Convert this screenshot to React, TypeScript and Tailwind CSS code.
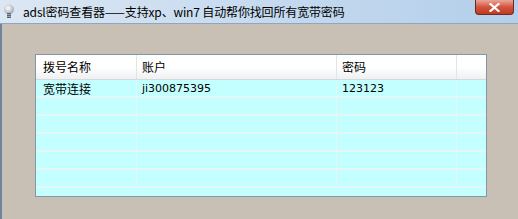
import React from "react";

const rows = [
  ["宽带连接", "ji300875395", "123123"],
  ["", "", ""],
  ["", "", ""],
  ["", "", ""],
  ["", "", ""],
  ["", "", ""],
];

export default function App() {
  const font = { fontFamily: '"Noto Sans CJK SC", "Liberation Sans", sans-serif' };
  const latin = { fontFamily: '"DejaVu Sans", "Noto Sans CJK SC", sans-serif', fontSize: 11 };
  return (
    <div className="w-[518px] h-[219px] flex flex-col overflow-hidden bg-[#c8c0b4]" style={font}>
      <div className="h-[24px] flex items-center bg-gradient-to-r from-[#dbe7f3] via-[#c6daef] to-[#b4cfea] border-b border-[#8ea6c0] relative">
        <svg width="12" height="16" viewBox="0 0 12 16" className="ml-[3px] mt-[1px]">
          <defs>
            <radialGradient id="bulb" cx="0.4" cy="0.35" r="0.7">
              <stop offset="0" stopColor="#ffffff" />
              <stop offset="1" stopColor="#9aa2ad" />
            </radialGradient>
          </defs>
          <circle cx="6" cy="5.5" r="5" fill="url(#bulb)" />
          <rect x="4" y="9" width="4" height="5" fill="#5c6470" />
          <rect x="4" y="10" width="4" height="1" fill="#9aa2ad" />
          <rect x="4" y="12" width="4" height="1" fill="#9aa2ad" />
        </svg>
        <span className="ml-[8px] text-[12px] leading-none text-black tracking-[-0.15px]">adsl密码查看器——支持xp、win7 自动帮你找回所有宽带密码</span>
        <div className="absolute right-[4px] top-0 w-[39px] h-[15px] rounded-b-[4px] border border-t-0 border-[#6b2a22] bg-gradient-to-b from-[#e9a598] via-[#d2533e] to-[#c03a22] flex items-center justify-center">
          <svg width="11" height="9" viewBox="0 0 11 9">
            <path d="M1.5 1 L9.5 8 M9.5 1 L1.5 8" stroke="#ffffff" strokeWidth="2.2" strokeLinecap="square" />
          </svg>
        </div>
      </div>
      <div className="flex-1 border-l-2 border-[#6f8499] pt-[30px] pl-[33px]">
        <div className="w-[452px] h-[143px] border border-[#7f98a4] bg-[#c4ffff] flex flex-col overflow-hidden">
          <div className="h-[25px] shrink-0 flex bg-gradient-to-b from-white via-white to-[#eef0f2] border-b border-[#d6d9dc] text-[12px] text-black">
            <div className="w-[101px] flex items-center pl-[7px] border-r border-[#e2e4e6]">拨号名称</div>
            <div className="w-[200px] flex items-center pl-[5px] border-r border-[#e2e4e6]">账户</div>
            <div className="w-[120px] flex items-center pl-[5px] border-r border-[#e2e4e6]">密码</div>
            <div className="flex-1" />
          </div>
          {rows.map((r, i) => (
            <div key={i} className="h-[18px] shrink-0 flex border-b-2 border-[#e4f6f6] text-[12px] text-black">
              <div className="w-[101px] flex items-center pl-[7px] pt-[2px] border-r border-[#e4f6f6]">{r[0]}</div>
              <div className="w-[200px] flex items-center pl-[5px] pt-[2px] border-r border-[#e4f6f6]" style={latin}>{r[1]}</div>
              <div className="w-[120px] flex items-center pl-[5px] pt-[2px] border-r border-[#e4f6f6]" style={latin}>{r[2]}</div>
              <div className="flex-1" />
            </div>
          ))}
        </div>
      </div>
    </div>
  );
}
